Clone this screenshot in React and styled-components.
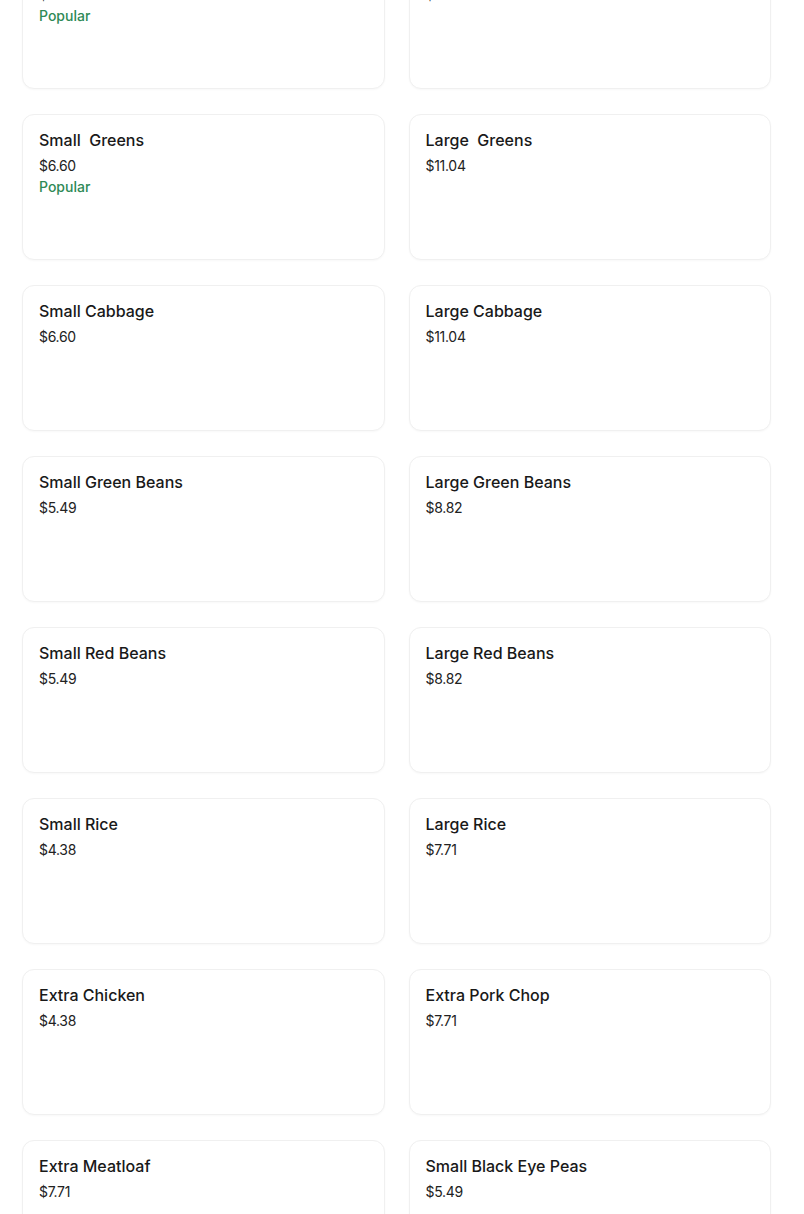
import styled, { createGlobalStyle } from "styled-components";

const Global = createGlobalStyle`
  body {
    margin: 0;
    background: #fff;
    font-family: Inter, "Noto Sans", "Liberation Sans", sans-serif;
    color: #191919;
  }
`;

const Grid = styled.div`
  display: grid;
  grid-template-columns: 1fr 1fr;
  column-gap: 24px;
  row-gap: 25px;
  padding: 0 33px 0 22px;
  margin-top: -57px;
`;

const Card = styled.div`
  box-sizing: border-box;
  height: 146px;
  border: 1px solid #f0f0f0;
  border-radius: 12px;
  box-shadow: 0 1px 2px rgba(0, 0, 0, 0.03);
  padding: 15px 16px;
  display: flex;
  flex-direction: column;
  background: #fff;
`;

const Title = styled.div`
  font-size: 16px;
  font-weight: 500;
  line-height: 20px;
  white-space: pre;
  margin-bottom: 6px;
`;

const Price = styled.div`
  font-size: 14px;
  line-height: 20px;
  color: #222;
  letter-spacing: -0.3px;
`;

const Badge = styled.div`
  font-size: 14px;
  font-weight: 500;
  line-height: 22px;
  color: #2f8a56;
`;

const items = [
  { name: "Regular Chicken", price: "$7.71", popular: true },
  { name: "Large Chicken", price: "$11.04" },
  { name: "Small  Greens", price: "$6.60", popular: true },
  { name: "Large  Greens", price: "$11.04" },
  { name: "Small Cabbage", price: "$6.60" },
  { name: "Large Cabbage", price: "$11.04" },
  { name: "Small Green Beans", price: "$5.49" },
  { name: "Large Green Beans", price: "$8.82" },
  { name: "Small Red Beans", price: "$5.49" },
  { name: "Large Red Beans", price: "$8.82" },
  { name: "Small Rice", price: "$4.38" },
  { name: "Large Rice", price: "$7.71" },
  { name: "Extra Chicken", price: "$4.38" },
  { name: "Extra Pork Chop", price: "$7.71" },
  { name: "Extra Meatloaf", price: "$7.71" },
  { name: "Small Black Eye Peas", price: "$5.49" },
];

const App = () => {
  return (
    <>
      <Global />
      <Grid>
        {items.map((it, i) => (
          <Card key={i}>
            <Title>{it.name}</Title>
            <Price>{it.price}</Price>
            {it.popular && <Badge>Popular</Badge>}
          </Card>
        ))}
      </Grid>
    </>
  );
};

export default App;
